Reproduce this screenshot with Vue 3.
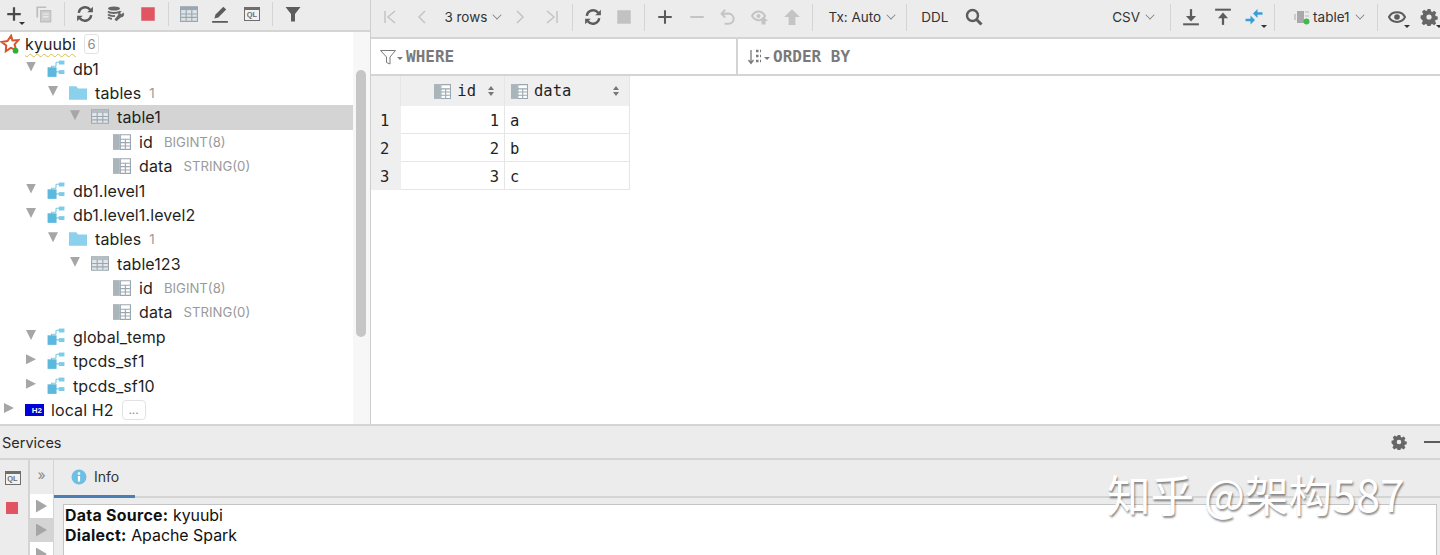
<template>
  <div class="app">
    <svg class="defs" width="0" height="0">
      <symbol id="plus" viewBox="0 0 16 16"><path d="M8 2v12M2 8h12" stroke="#4a4a4a" stroke-width="2" fill="none" /></symbol>
      <symbol id="plus-light" viewBox="0 0 16 16"><path d="M8 2v12M2 8h12" stroke="#5a5a5a" stroke-width="1.800" fill="none" /></symbol>
      <symbol id="minus" viewBox="0 0 16 16"><path d="M2 8h12" stroke="#c4c4c4" stroke-width="1.800" fill="none" /></symbol>
      <symbol id="copy" viewBox="0 0 16 16"><path d="M2 11V2h8" stroke="#bdbdbd" stroke-width="1.500" fill="none" /><path d="M5 5h9v10H5z" fill="#cfcfcf" stroke="#bdbdbd" /><path d="M7 8h5M7 10.500h5" stroke="#eee" /></symbol>
      <symbol id="refresh" viewBox="0 0 16 16"><path d="M2.500 7A5.700 5.700 0 0 1 12.600 4.200M13.500 9A5.700 5.700 0 0 1 3.400 11.800" stroke="#5c5c5c" stroke-width="2.200" fill="none" /><path d="M10 6.500h5v-5zM6 9.500H1v5z" fill="#5c5c5c" /></symbol>
      <symbol id="ddl" viewBox="0 0 18 16"><ellipse cx="7" cy="2.500" rx="6" ry="2" fill="#666" /><path d="M1 5.500c2 2 9 2 12 0M1 8.500c2 1.500 5 1.700 7 1.400M1 11.500c1.500 1 3 1.300 4 1.300" stroke="#666" stroke-width="1.800" fill="none" /><path d="M16.500 6.500l-2.200 1.800-1.300-1.200 1.800-2a3 3 0 0 0-3.600 3.600L7.500 13.500l1.800 1.800 4.800-4a3 3 0 0 0 2.400-4.800z" fill="#666" /></symbol>
      <symbol id="stop" viewBox="0 0 16 16"><rect x="2" y="2" width="12" height="12" fill="#e05561" /></symbol>
      <symbol id="stop-off" viewBox="0 0 16 16"><rect x="2" y="2" width="12" height="12" fill="#c2c2c2" /></symbol>
      <symbol id="grid" viewBox="0 0 16 16"><path d="M.5 1.500h15v13H.500z" fill="#dfe3e6" stroke="#9aa7b0" /><path d="M.5 1.500h15v3H.500z" fill="#9aa7b0" /><path d="M5.500 4v10M10.500 4v10M1 8h14M1 11h14" stroke="#9aa7b0" /></symbol>
      <symbol id="edit" viewBox="0 0 16 16"><path d="M1 15h14" stroke="#5c5c5c" stroke-width="1.600" /><path d="M3 12l1-3.500L11 1.500l2.500 2.500-7 7z" fill="#5c5c5c" /></symbol>
      <symbol id="filter" viewBox="0 0 18 18"><path d="M1.500 2h15L11 9v7.500H7V9z" fill="#5c5c5c" /></symbol>
      <symbol id="first" viewBox="0 0 18 18"><path d="M4 3v12M14 3L7 9l7 6" stroke="#c4c4c4" stroke-width="1.500" fill="none" /></symbol>
      <symbol id="prev" viewBox="0 0 18 18"><path d="M12 3L6 9l6 6" stroke="#c4c4c4" stroke-width="1.500" fill="none" /></symbol>
      <symbol id="next" viewBox="0 0 18 18"><path d="M6 3l6 6-6 6" stroke="#c4c4c4" stroke-width="1.500" fill="none" /></symbol>
      <symbol id="last" viewBox="0 0 18 18"><path d="M14 3v12M4 3l7 6-7 6" stroke="#c4c4c4" stroke-width="1.500" fill="none" /></symbol>
      <symbol id="undo" viewBox="0 0 16 16"><path d="M5.500 1.500L2.300 5l3.200 3.500" stroke="#c4c4c4" stroke-width="1.700" fill="none" /><path d="M3 5h5.500a4.500 4.500 0 0 1 0 9H5" stroke="#c4c4c4" stroke-width="1.800" fill="none" /></symbol>
      <symbol id="revert" viewBox="0 0 18 16"><path d="M1 7c3-6 10-6 13 0-1 2-2 3-4 4-4 1-7-1-9-4z" stroke="#c4c4c4" stroke-width="2" fill="none" /><circle cx="7.500" cy="7" r="2" fill="#c4c4c4" /><path d="M12.500 7.500l4.500 4.500h-2.500v3.500h-4V12H8z" fill="#c4c4c4" /></symbol>
      <symbol id="up" viewBox="0 0 16 16"><path d="M8 1l7 7h-4v7H5V8H1z" fill="#c4c4c4" /></symbol>
      <symbol id="search" viewBox="0 0 18 18"><circle cx="7.500" cy="7.500" r="5.500" fill="none" stroke="#5c5c5c" stroke-width="2.400" /><path d="M11.500 11.500l5 5" stroke="#5c5c5c" stroke-width="3" /></symbol>
      <symbol id="download" viewBox="0 0 16 16"><path d="M1 14.500h14" stroke="#5c5c5c" stroke-width="1.800" /><path d="M8 1v9" stroke="#5c5c5c" stroke-width="2" /><path d="M3.500 7h9L8 12z" fill="#5c5c5c" /></symbol>
      <symbol id="upload" viewBox="0 0 16 16"><path d="M1 1.500h14" stroke="#5c5c5c" stroke-width="1.800" /><path d="M8 6v9" stroke="#5c5c5c" stroke-width="2" /><path d="M3.500 9h9L8 4z" fill="#5c5c5c" /></symbol>
      <symbol id="compare" viewBox="0 0 18 16"><path d="M17.500 4.500H12M.5 11H6" stroke="#389fd6" stroke-width="2.400" /><path d="M12.500 0v9L8 4.500zM5.500 6.500v9L10 11z" fill="#389fd6" /></symbol>
      <symbol id="eye" viewBox="0 0 18 16"><path d="M1 8c3-6.500 13-6.500 16 0-3 6.500-13 6.500-16 0z" fill="none" stroke="#5c5c5c" stroke-width="2" /><circle cx="9" cy="8" r="2.800" fill="#5c5c5c" /></symbol>
      <symbol id="gear" viewBox="-1 -1 18 18"><path fill-rule="evenodd" d="M6.500 0h3l.5 2.300 1.300.6 2-1.200 2 2.100-1.200 2 .5 1.300 2.100.4v3l-2.100.5-.6 1.300 1.200 2-2 2-2-1.200-1.300.5-.4 2.100h-3l-.5-2.100-1.300-.5-2 1.200-2.100-2 1.200-2-.5-1.300L-.4 9.500v-3l2.100-.4.5-1.300-1.200-2 2.100-2.100 2 1.200 1.300-.6zM8 5.400a2.600 2.600 0 1 0 0 5.200 2.600 2.600 0 0 0 0-5.200z" fill="#666" /></symbol>
      <symbol id="conn" viewBox="0 0 18 16"><rect x="1" y="5" width="2" height="6" fill="#c9c9c9" /><rect x="4" y="2" width="7" height="12" fill="#a9a9a9" /><path d="M12 3h4M12 7h4" stroke="#c9c9c9" stroke-width="1.500" /><circle cx="13.500" cy="12.500" r="3" fill="#3fb950" /></symbol>
      <symbol id="star" viewBox="0 0 18 18"><path d="M10 1.500l1.200 4.300 5.300-.3-3.400 3.900 1.400 5-4.800-1.900-4.500 3 .4-5.200L1.500 7.200l5.200-.9z" fill="#fff" stroke="#d8552b" stroke-width="1.800" /><circle cx="14" cy="15" r="2.600" fill="#2fae3c" /></symbol>
      <symbol id="db" viewBox="0 0 16 16"><path d="M8 2H12M4 7V5.500H8M8 5.500V2M8 10.500H12" stroke="#7ccbe8" fill="none" /><rect x="10.500" y="0.500" width="5" height="3.500" fill="#7ccbe8" /><rect x="0.500" y="6.500" width="8" height="8.500" fill="#5db8dd" /><rect x="10.500" y="9" width="5" height="3.500" fill="#7ccbe8" /></symbol>
      <symbol id="folder" viewBox="0 0 16 16"><path d="M0 2h6.500l1.500 2h8v10H0z" fill="#8bd0ec" /></symbol>
      <symbol id="table" viewBox="0 0 16 16"><path d="M.5 1.500h15v12H.5z" fill="#e4e7e9" stroke="#9aa7b0" /><path d="M.5 1.500h15v3H.5z" fill="#b5bec4" /><path d="M5.500 4v9M10.500 4v9M1 7.500h14M1 10.500h14" stroke="#9aa7b0" /></symbol>
      <symbol id="column" viewBox="0 0 16 16"><rect x="0" y="1" width="6" height="14" fill="#a9b4bb" /><path d="M6.500 1.500h9v13h-9z" fill="#fff" stroke="#9aa7b0" /><path d="M6 5.500h9M6 8.500h9M6 11.500h9M11 5v9" stroke="#9aa7b0" /></symbol>
      <symbol id="where" viewBox="0 0 16 16"><path d="M.5 1.500h15L10 8v7l-3.500-1.500V8z" fill="none" stroke="#7a7a7a" /></symbol>
      <symbol id="order" viewBox="0 0 16 16"><path d="M4 1v13M1.500 11L4 14.500 6.500 11" stroke="#7a7a7a" fill="none" stroke-width="1.300" /><path d="M9 2h5M9 7h5M9 12h5" stroke="#7a7a7a" stroke-width="2.500" stroke-dasharray="2.500 1.500" /></symbol>
      <symbol id="sort" viewBox="0 0 6 10"><path d="M3 0l3 4H0zM3 10L0 6h6z" fill="#777" /></symbol>
      <symbol id="info" viewBox="0 0 16 16"><circle cx="8" cy="8" r="7.500" fill="#6fbfe3" /><circle cx="8" cy="4.500" r="1.300" fill="#fff" /><rect x="6.900" y="7" width="2.200" height="5.500" fill="#fff" /></symbol>
    </svg>

    <div class="top">
      <aside class="left">
        <div class="left-bar">
          <template v-for="(b, i) in leftTools" :key="i">
            <span v-if="b === '|'" class="sep"></span>
            <span v-else class="btn" :class="{ more: b === 'plus' }">
              <span v-if="b === 'ql'" class="ql-box">QL</span>
              <svg v-else class="ic"><use :href="'#' + b" /></svg>
            </span>
          </template>
        </div>
        <div class="tree">
          <div v-for="(r, i) in treeRows" :key="i" class="row" :class="{ sel: r.sel }" :style="{ paddingLeft: 4 + r.level * 22 + 'px' }">
            <template v-if="r.root">
              <svg class="star"><use href="#star" /></svg>
              <span class="name squiggle">{{ r.name }}</span>
              <span class="count-box">6</span>
            </template>
            <template v-else>
              <span class="arrow" :class="r.arrow"></span>
              <span v-if="r.icon === 'h2'" class="h2">H2</span>
              <svg v-else class="ic"><use :href="'#' + r.icon" /></svg>
              <span class="name">{{ r.name }}</span>
              <span v-if="r.count" class="hint small">{{ r.count }}</span>
              <span v-if="r.type" class="hint">{{ r.type }}</span>
              <span v-if="r.dots" class="dots">...</span>
            </template>
          </div>
          <div class="scroll"></div>
        </div>
      </aside>

      <section class="right">
        <div class="right-bar">
          <span class="btn"><svg class="ic"><use href="#first" /></svg></span>
          <span class="btn"><svg class="ic"><use href="#prev" /></svg></span>
          <span class="drop rows">3 rows<i class="chev"></i></span>
          <span class="btn"><svg class="ic"><use href="#next" /></svg></span>
          <span class="btn"><svg class="ic"><use href="#last" /></svg></span>
          <span class="sep"></span>
          <span class="btn"><svg class="ic"><use href="#refresh" /></svg></span>
          <span class="btn"><svg class="ic"><use href="#stop-off" /></svg></span>
          <span class="sep"></span>
          <span class="btn"><svg class="ic"><use href="#plus-light" /></svg></span>
          <span class="btn"><svg class="ic"><use href="#minus" /></svg></span>
          <span class="btn"><svg class="ic"><use href="#undo" /></svg></span>
          <span class="btn"><svg class="ic"><use href="#revert" /></svg></span>
          <span class="btn"><svg class="ic"><use href="#up" /></svg></span>
          <span class="sep"></span>
          <span class="drop tx">Tx: Auto<i class="chev"></i></span>
          <span class="sep"></span>
          <span class="drop ddl">DDL</span>
          <span class="btn"><svg class="ic"><use href="#search" /></svg></span>
          <span class="grow"></span>
          <span class="drop csv">CSV<i class="chev"></i></span>
          <span class="sep"></span>
          <span class="btn"><svg class="ic"><use href="#download" /></svg></span>
          <span class="btn"><svg class="ic"><use href="#upload" /></svg></span>
          <span class="btn more"><svg class="ic"><use href="#compare" /></svg></span>
          <span class="sep"></span>
          <span class="drop conn"><svg class="ic"><use href="#conn" /></svg>table1<i class="chev"></i></span>
          <span class="sep"></span>
          <span class="btn more"><svg class="ic"><use href="#eye" /></svg></span>
          <span class="btn more gear-btn"><svg class="ic"><use href="#gear" /></svg></span>
        </div>
        <div class="filters">
          <div class="where"><svg class="ic"><use href="#where" /></svg><b class="caret"></b>WHERE</div>
          <div class="order"><svg class="ic"><use href="#order" /></svg><b class="caret"></b>ORDER BY</div>
        </div>
        <div class="grid">
          <div class="th gut"></div>
          <div class="th col-id"><svg class="ic"><use href="#column" /></svg>id<svg class="sort"><use href="#sort" /></svg></div>
          <div class="th col-data"><svg class="ic"><use href="#column" /></svg>data<svg class="sort"><use href="#sort" /></svg></div>
          <template v-for="r in tableRows" :key="r.id">
            <div class="gut num">{{ r.id }}</div>
            <div class="td right-al">{{ r.id }}</div>
            <div class="td">{{ r.data }}</div>
          </template>
        </div>
      </section>
    </div>

    <section class="services">
      <div class="svc-title">
        <span>Services</span>
        <span class="grow"></span>
        <svg class="ic svc-gear"><use href="#gear" /></svg>
        <span class="dash"></span>
      </div>
      <div class="svc-body">
        <div class="strip">
          <span class="ql-box">QL</span>
          <svg class="ic stop-ic"><use href="#stop" /></svg>
        </div>
        <div class="nav">
          <div class="nav-head">»</div>
          <div v-for="n in 3" :key="n" class="nav-row" :class="{ on: n === 2 }"><span class="arrow closed"></span></div>
        </div>
        <div class="pane">
          <div class="tabs">
            <div class="tab"><svg class="ic"><use href="#info" /></svg>Info</div>
          </div>
          <div class="output">
            <div><b>Data Source:</b> kyuubi</div>
            <div><b>Dialect:</b> Apache Spark</div>
          </div>
        </div>
      </div>
    </section>

    <div class="mark">知乎 @架构587</div>
  </div>
</template>

<script setup>
const leftTools = ['plus', 'copy', '|', 'refresh', 'ddl', 'stop', '|', 'grid', 'edit', 'ql', '|', 'filter']

const treeRows = [
  { level: 0, root: true, name: 'kyuubi' },
  { level: 1, arrow: 'open', icon: 'db', name: 'db1' },
  { level: 2, arrow: 'open', icon: 'folder', name: 'tables', count: '1' },
  { level: 3, arrow: 'open', icon: 'table', name: 'table1', sel: true },
  { level: 4, icon: 'column', name: 'id', type: 'BIGINT(8)' },
  { level: 4, icon: 'column', name: 'data', type: 'STRING(0)' },
  { level: 1, arrow: 'open', icon: 'db', name: 'db1.level1' },
  { level: 1, arrow: 'open', icon: 'db', name: 'db1.level1.level2' },
  { level: 2, arrow: 'open', icon: 'folder', name: 'tables', count: '1' },
  { level: 3, arrow: 'open', icon: 'table', name: 'table123' },
  { level: 4, icon: 'column', name: 'id', type: 'BIGINT(8)' },
  { level: 4, icon: 'column', name: 'data', type: 'STRING(0)' },
  { level: 1, arrow: 'open', icon: 'db', name: 'global_temp' },
  { level: 1, arrow: 'closed', icon: 'db', name: 'tpcds_sf1' },
  { level: 1, arrow: 'closed', icon: 'db', name: 'tpcds_sf10' },
  { level: 0, arrow: 'closed', icon: 'h2', name: 'local H2', dots: true }
]

const tableRows = [
  { id: 1, data: 'a' },
  { id: 2, data: 'b' },
  { id: 3, data: 'c' }
]
</script>

<style>
html,
body {
  margin: 0;
  background: #fff;
}
</style>

<style scoped>
.app {
  position: relative;
  width: 1440px;
  height: 555px;
  overflow: hidden;
  display: flex;
  flex-direction: column;
  font-family: Inter, "Noto Sans", sans-serif;
  font-size: 16px;
  color: #1f1f1f;
  background: #fff;
}
.defs {
  position: absolute;
}
.ic {
  width: 16px;
  height: 16px;
  flex: none;
}
.grow {
  flex: 1;
}

.top {
  height: 424px;
  display: flex;
  border-bottom: 2px solid #d4d4d4;
}
.left {
  width: 370px;
  flex: none;
  border-right: 1px solid #cfcfcf;
  display: flex;
  flex-direction: column;
}
.left-bar {
  height: 32px;
  flex: none;
  display: flex;
  align-items: center;
  box-sizing: border-box;
  padding-bottom: 3px;
  background: #ececec;
  border-bottom: 2px solid #d4d4d4;
}
.left-bar .ic,
.right-bar .ic {
  width: 18px;
  height: 18px;
}
.btn {
  position: relative;
  width: 31.700px;
  height: 24px;
  flex: none;
  display: flex;
  align-items: center;
  justify-content: center;
}
.btn.more::after {
  content: "";
  position: absolute;
  right: 3px;
  bottom: 1px;
  border: 3px solid transparent;
  border-top: 3px solid #333;
  border-bottom: 0;
}
.sep {
  width: 1px;
  height: 24px;
  flex: none;
  background: #d4d4d4;
  margin: 0 4px;
}
.left-bar .btn:first-child {
  width: 28px;
}
.ql-box {
  width: 16px;
  height: 14px;
  flex: none;
  box-sizing: border-box;
  background: #f2f2f2;
  border: 1px solid #6e6e6e;
  border-top-width: 3px;
  color: #6e6e6e;
  font: 700 7.500px/10px "Liberation Sans", sans-serif;
  text-align: center;
}

.tree {
  position: relative;
  flex: 1;
  background: linear-gradient(90deg, #fff 353px, #f7f7f7 353px);
  overflow: hidden;
}
.row {
  height: 24.400px;
  width: 353px;
  box-sizing: border-box;
  display: flex;
  align-items: center;
  white-space: nowrap;
}
.row .ic {
  width: 18px;
  height: 18px;
  margin: 0 -2px 0 -1px;
}
.row.sel {
  background: #d4d4d4;
}
.arrow {
  width: 10px;
  height: 10px;
  flex: none;
  margin-right: 12px;
  position: relative;
  top: -2px;
}
.arrow.open {
  background: #a6a6a6;
  clip-path: polygon(0 0, 100% 0, 50% 100%);
}
.arrow.closed {
  background: #a6a6a6;
  clip-path: polygon(0 0, 100% 50%, 0 100%);
}
.name {
  margin-left: 10px;
  letter-spacing: 0.1px;
}
.star {
  width: 20px;
  height: 20px;
  margin-left: -4px;
  flex: none;
}
.row .squiggle {
  margin-left: 5px;
  text-decoration: underline wavy #d8c04c 1px;
  text-underline-offset: 3px;
}
.count-box {
  margin-left: 8px;
  width: 13px;
  height: 18px;
  font-size: 13px;
  line-height: 18px;
  text-align: center;
  color: #8c8c8c;
  border: 1px solid #e2e2e2;
  border-radius: 3px;
}
.hint {
  margin-left: 11px;
  font-size: 13.200px;
  color: #9a9a9a;
}
.hint.small {
  margin-left: 8px;
}
.h2 {
  width: 19px;
  height: 12px;
  flex: none;
  margin: 0 -3px 0 -1px;
  background: #0000d8;
  color: #fff;
  font: 700 8px/13px "Liberation Sans", sans-serif;
  text-align: right;
  padding-right: 2px;
  box-sizing: border-box;
}
.dots {
  margin-left: 8px;
  width: 22px;
  height: 18px;
  font-size: 12px;
  line-height: 18px;
  text-align: center;
  color: #8c8c8c;
  border: 1px solid #e2e2e2;
  border-radius: 4px;
}
.scroll {
  position: absolute;
  left: 356px;
  top: 38px;
  width: 10px;
  height: 267px;
  background: #c6c6c6;
  border-radius: 5px;
}

.right {
  flex: 1;
  min-width: 0;
  display: flex;
  flex-direction: column;
}
.right-bar {
  height: 39px;
  flex: none;
  display: flex;
  align-items: center;
  padding: 0 0 3px 3px;
  background: #ececec;
  border-bottom: 2px solid #d4d4d4;
  box-sizing: border-box;
  font-size: 13.500px;
}
.right-bar .sep {
  height: 27px;
}
.gear-btn {
  margin-right: -5px;
}
.drop {
  display: flex;
  align-items: center;
  flex: none;
  color: #333;
}
.chev {
  width: 7px;
  height: 7px;
  margin: -4px 0 0 6px;
  border-right: 1.500px solid #777;
  border-bottom: 1.500px solid #777;
  transform: rotate(45deg) scale(0.8);
}
.rows {
  margin: 0 3px 0 7px;
}
.tx {
  margin: 0 7px 0 12px;
}
.ddl {
  margin: 0 10px 0 10px;
}
.csv {
  margin-right: 12px;
}
.conn {
  margin: 0 9px 0 14px;
}
.conn .ic {
  margin-right: 2px;
}
.filters {
  height: 37px;
  flex: none;
  display: flex;
  border-bottom: 2px solid #d4d4d4;
  box-sizing: border-box;
  font: 700 16px "DejaVu Sans Mono", monospace;
  color: #7a7a7a;
}
.where,
.order {
  display: flex;
  align-items: center;
  padding-left: 9px;
}
.where {
  width: 356px;
  border-right: 2px solid #d4d4d4;
}
.order {
  flex: 1;
}
.caret {
  border: 3px solid transparent;
  border-top: 3px solid #7a7a7a;
  border-bottom: 0;
  margin: 3px 3px 0 1px;
}
.grid {
  display: grid;
  grid-template-columns: 30px 104px 125px;
  grid-auto-rows: 28px;
  grid-template-rows: 30px;
  width: 259px;
  font: 15.500px "DejaVu Sans Mono", monospace;
  color: #1f1f1f;
}
.th,
.gut {
  background: #efefef;
}
.th {
  display: flex;
  align-items: center;
  justify-content: flex-end;
  gap: 6px;
  padding: 0 10px 0 0;
  box-sizing: border-box;
  border-right: 1px solid #e6e6e6;
}
.th .ic {
  width: 17px;
  height: 17px;
}
.col-data {
  justify-content: flex-start;
  padding-left: 6px;
}
.col-data .sort {
  margin-left: auto;
}
.sort {
  width: 6px;
  height: 10px;
  margin-left: 6px;
  flex: none;
}
.num {
  display: flex;
  align-items: center;
  padding: 2px 0 0 9px;
  box-sizing: border-box;
}
.td {
  display: flex;
  align-items: center;
  padding: 2px 5px 0;
  box-sizing: border-box;
  border-right: 1px solid #e6e6e6;
  border-bottom: 1px solid #e6e6e6;
}
.right-al {
  justify-content: flex-end;
}

.services {
  flex: 1;
  min-height: 0;
  display: flex;
  flex-direction: column;
  background: #ececec;
}
.svc-title {
  height: 32px;
  flex: none;
  display: flex;
  align-items: center;
  padding-left: 2px;
  font-size: 14.500px;
  color: #2a2a2a;
  border-bottom: 2px solid #d4d4d4;
}
.svc-gear {
  margin-right: 17px;
}
.dash {
  width: 16px;
  height: 2px;
  background: #5c5c5c;
}
.svc-body {
  flex: 1;
  min-height: 0;
  display: flex;
}
.strip {
  width: 30px;
  flex: none;
  display: flex;
  flex-direction: column;
  align-items: center;
  gap: 15px;
  padding: 11px 3px 0 0;
  box-sizing: border-box;
  border-right: 2px solid #d4d4d4;
}
.stop-ic {
  margin-left: -1px;
}
.nav {
  width: 24px;
  flex: none;
  background: #fff;
  border-right: 1px solid #d4d4d4;
  box-sizing: border-box;
}
.nav-head {
  height: 34px;
  background: #ececec;
  color: #888;
  font-size: 14px;
  line-height: 30px;
  text-align: center;
}
.nav-row {
  height: 24px;
  display: flex;
  align-items: center;
  justify-content: center;
}
.nav-row.on {
  background: #d4d4d4;
}
.nav-row .arrow {
  margin: 0;
  top: 0;
  width: 11px;
  height: 13px;
}
.pane {
  flex: 1;
  min-width: 0;
  display: flex;
  flex-direction: column;
}
.tabs {
  height: 38px;
  flex: none;
  border-bottom: 2px solid #d4d4d4;
  box-sizing: border-box;
  display: flex;
}
.tab {
  width: 81px;
  height: 38px;
  box-sizing: border-box;
  display: flex;
  align-items: center;
  gap: 7px;
  padding: 0 0 2px 17px;
  font-size: 14px;
  color: #333;
  border-bottom: 3px solid #4a7fb5;
}
.output {
  flex: 1;
  margin: 6px 3px 0 9px;
  padding: 1px;
  background: #fff;
  border: 1px solid #c4c4c4;
  border-bottom: 0;
  font-size: 15.900px;
  line-height: 20px;
  color: #111;
}
.output b {
  font-weight: 700;
  letter-spacing: 0.3px;
}

.mark {
  position: absolute;
  left: 1107px;
  top: 466px;
  font: 400 43.500px/56px "Noto Sans CJK SC", sans-serif;
  color: #fff;
  text-shadow: 1px 2px 2px rgba(0, 0, 0, 0.45);
  white-space: nowrap;
}
</style>
